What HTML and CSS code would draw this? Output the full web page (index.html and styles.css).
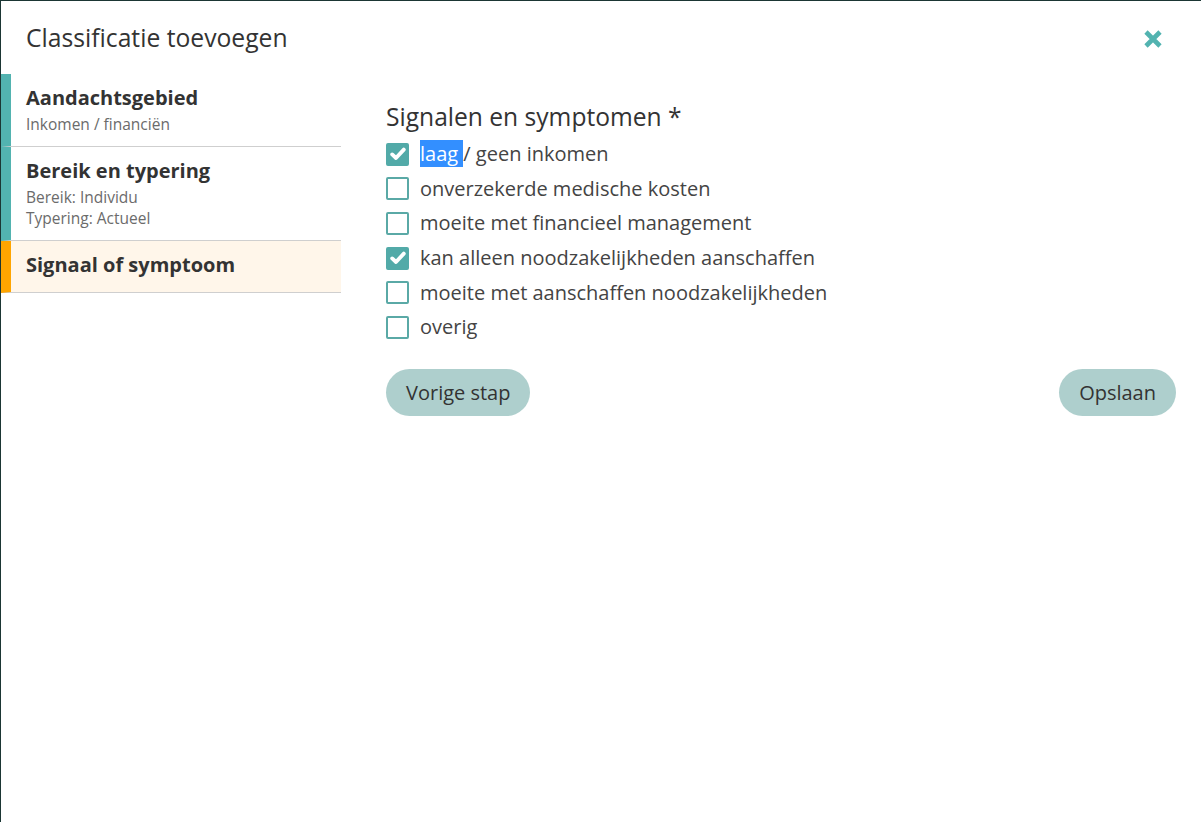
FILE: index.html
```html
<!DOCTYPE html>
<html lang="nl">
<head>
    <meta charset="UTF-8">
    <meta name="viewport" content="width=device-width, initial-scale=1.0">
    <title>Classificatie toevoegen</title>
    <link rel="stylesheet" href="styles.css">
</head>
<body>
    <div class="modal">
        <div class="modal-header">
            <h1 class="modal-title">Classificatie toevoegen</h1>
            <button class="close" type="button" aria-label="Sluiten">
                <svg width="18" height="18" viewBox="0 0 18 18">
                    <path d="M2 2 L16 16 M16 2 L2 16" stroke="#52b3b0" stroke-width="4.6" fill="none"/>
                </svg>
            </button>
        </div>

        <div class="modal-body">
            <div class="steps">
                <div class="step done">
                    <div class="step-title">Aandachtsgebied</div>
                    <div class="step-sub">Inkomen / financiën</div>
                </div>
                <div class="step done">
                    <div class="step-title">Bereik en typering</div>
                    <div class="step-sub">Bereik: Individu</div>
                    <div class="step-sub">Typering: Actueel</div>
                </div>
                <div class="step active">
                    <div class="step-title">Signaal of symptoom</div>
                </div>
            </div>

            <div class="content">
                <h2 class="field-label">Signalen en symptomen *</h2>

                <div class="options">
                    <label class="option">
                        <span class="box checked">
                            <svg width="16" height="14" viewBox="0 0 16 14"><path d="M2.2 7.4 L6 11 L13.8 2.6" stroke="#fff" stroke-width="3.8" fill="none" stroke-linecap="round" stroke-linejoin="round"/></svg>
                        </span>
                        <span class="text"><span class="selected">laag </span>/ geen inkomen</span>
                    </label>
                    <label class="option">
                        <span class="box"></span>
                        <span class="text">onverzekerde medische kosten</span>
                    </label>
                    <label class="option">
                        <span class="box"></span>
                        <span class="text">moeite met financieel management</span>
                    </label>
                    <label class="option">
                        <span class="box checked">
                            <svg width="16" height="14" viewBox="0 0 16 14"><path d="M2.2 7.4 L6 11 L13.8 2.6" stroke="#fff" stroke-width="3.8" fill="none" stroke-linecap="round" stroke-linejoin="round"/></svg>
                        </span>
                        <span class="text">kan alleen noodzakelijkheden aanschaffen</span>
                    </label>
                    <label class="option">
                        <span class="box"></span>
                        <span class="text">moeite met aanschaffen noodzakelijkheden</span>
                    </label>
                    <label class="option">
                        <span class="box"></span>
                        <span class="text">overig</span>
                    </label>
                </div>

                <div class="actions">
                    <button class="btn" type="button">Vorige stap</button>
                    <button class="btn" type="button">Opslaan</button>
                </div>
            </div>
        </div>
    </div>
</body>
</html>
```

FILE: styles.css
```css
html, body{
    height: 100%;
}
body{
    margin: 0;
    background: #1b3634;
    font-family: 'Open Sans', 'Noto Sans', sans-serif;
    color: #444;
    overflow: hidden;
}
.modal{
    margin: 1px 0 0 1px;
    height: calc(100% - 1px);
    background: #fff;
}
.modal-header{
    display: flex;
    align-items: center;
    justify-content: space-between;
    height: 73px;
    padding: 0 39px 0 25px;
}
.modal-title{
    margin: 0;
    font-size: 24.7px;
    font-weight: 400;
    color: #333;
}
.close{
    border: 0;
    background: none;
    padding: 0;
    margin-top: 2px;
    cursor: pointer;
}
.close svg{
    display: block;
}

.modal-body{
    display: flex;
}
.steps{
    width: 340px;
    flex-shrink: 0;
}
.step{
    border-left: 10px solid #52b3b0;
    border-bottom: 1px solid #cfcfcf;
    padding: 11px 15px 11px 15px;
}
.step.active{
    border-left-color: #ffa500;
    background: #fff6ea;
    padding-bottom: 14px;
}
.step-title{
    font-size: 20px;
    font-weight: 700;
    line-height: 26px;
    color: #333;
}
.step-sub{
    font-size: 15.5px;
    line-height: 21px;
    color: #6b6b6b;
}
.step-title + .step-sub{
    margin-top: 3px;
}

.content{
    flex: 1;
    padding: 27px 25px 0 45px;
}
.field-label{
    margin: 0 0 4px;
    font-size: 24.6px;
    font-weight: 400;
    line-height: 32px;
    color: #333;
}
.options{
    display: flex;
    flex-direction: column;
}
.option{
    display: flex;
    align-items: center;
    height: 34.6px;
    font-size: 20px;
    cursor: pointer;
}
.box{
    display: flex;
    align-items: center;
    justify-content: center;
    box-sizing: border-box;
    width: 23px;
    height: 23px;
    margin-right: 11px;
    border: 2px solid #5aa9a6;
    border-radius: 2px;
    background: #fff;
}
.box.checked{
    background: #52aaa8;
    border-color: #52aaa8;
}
.text{
    line-height: 26px;
}
.selected{
    background: #338fff;
    color: #fff;
}

.actions{
    display: flex;
    justify-content: space-between;
    margin-top: 24px;
}
.btn{
    height: 47px;
    padding: 0 20px;
    border: 0;
    border-radius: 24px;
    background: #aecfcd;
    font-family: inherit;
    font-size: 20px;
    color: #333;
    cursor: pointer;
}
```
